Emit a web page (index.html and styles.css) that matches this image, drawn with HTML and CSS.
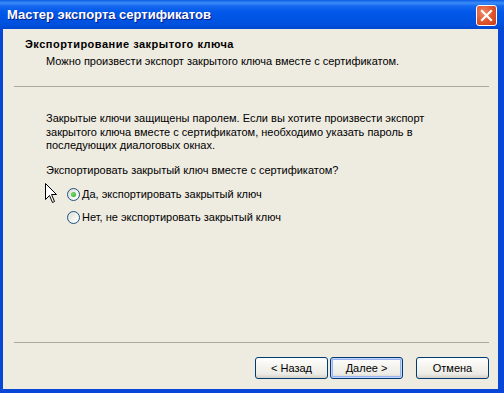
FILE: index.html
```html
<!DOCTYPE html>
<html lang="ru">
<head>
    <meta charset="UTF-8">
    <title>Мастер экспорта сертификатов</title>
    <link rel="stylesheet" href="styles.css">
</head>
<body>
<div class="window">
    <div class="titlebar">
        <span class="title-text">Мастер экспорта сертификатов</span>
        <span class="close-btn">
            <svg width="13" height="13" viewBox="0 0 13 13">
                <path d="M2 2 L11 11 M11 2 L2 11" stroke="#fff" stroke-width="2.2" stroke-linecap="square"/>
            </svg>
        </span>
    </div>
    <div class="client">
        <div class="header">
            <div class="header-title">Экспортирование закрытого ключа</div>
            <div class="header-sub">Можно произвести экспорт закрытого ключа вместе с сертификатом.</div>
        </div>
        <div class="rule"></div>
        <div class="content">
            <p class="info">Закрытые ключи защищены паролем. Если вы хотите произвести экспорт<br>закрытого ключа вместе с сертификатом, необходимо указать пароль в<br>последующих диалоговых окнах.</p>
            <p class="question">Экспортировать закрытый ключ вместе с сертификатом?</p>
            <div class="options">
                <div class="option"><span class="radio checked"></span>Да, экспортировать закрытый ключ</div>
                <div class="option"><span class="radio"></span>Нет, не экспортировать закрытый ключ</div>
            </div>
            <!-- mouse pointer over the dialog -->
            <svg class="cursor" width="13" height="21" viewBox="0 0 13 21">
                <path d="M0.5 0.5 L0.5 16.5 L4.5 12.5 L7.5 19.5 L9.5 18.5 L6.5 11.5 L11.5 11.5 Z" fill="#fff" stroke="#000" stroke-width="1"/>
            </svg>
        </div>
        <div class="rule"></div>
        <div class="footer">
            <button class="btn">&lt; Назад</button>
            <button class="btn default">Далее &gt;</button>
            <button class="btn cancel">Отмена</button>
        </div>
    </div>
</div>
</body>
</html>
```

FILE: styles.css
```css
body {
    margin: 0;
    background: #fff;
    font-family: "Liberation Sans", Arial, sans-serif;
    font-size: 11px;
    color: #000;
}
.window {
    width: 504px;
    height: 393px;
    box-sizing: border-box;
    display: flex;
    flex-direction: column;
    background: #0846d8;
    padding: 0 6px 4px 3px;
}
.titlebar {
    height: 29px;
    margin: 0 -6px 0 -3px;
    padding: 0 7px 0 7px;
    display: flex;
    align-items: center;
    justify-content: space-between;
    background: linear-gradient(#0a5ce6 0, #3d8df7 3px, #1468f0 6px, #0258e8 12px, #0055e5 60%, #0050dc 85%, #0047cf 100%);
}
.title-text {
    color: #fff;
    font-weight: bold;
    font-size: 13px;
    text-shadow: 1px 1px 0 #0a1e8a;
}
.close-btn {
    width: 19px;
    height: 19px;
    border: 1px solid #fff;
    border-radius: 3px;
    margin-top: 1px;
    display: flex;
    align-items: center;
    justify-content: center;
    background: radial-gradient(circle at 35% 35%, #f08a6a 0, #e0572f 50%, #c43a16 100%);
}
.client {
    flex: 1;
    display: flex;
    flex-direction: column;
    background: #eeebe0;
}
.header {
    height: 57px;
    box-sizing: border-box;
    padding: 9px 0 0 22px;
    line-height: 13px;
}
.header-title {
    font-weight: bold;
    letter-spacing: 0.5px;
}
.header-sub {
    margin-top: 4px;
    padding-left: 21px;
}
.rule {
    height: 1px;
    margin: 0 9px 0 11px;
    background: #aca899;
}
.content {
    position: relative;
    flex: 1;
    padding: 25px 0 0 43px;
    line-height: 13.5px;
}
.content p {
    margin: 0;
}
.question {
    margin-top: 11px !important;
}
.options {
    margin-top: 11px;
    padding-left: 21px;
    display: flex;
    flex-direction: column;
    gap: 10px;
}
.option {
    display: flex;
    align-items: center;
    height: 13px;
}
.radio {
    width: 11px;
    height: 11px;
    border: 1px solid #1c5180;
    border-radius: 50%;
    margin-right: 2px;
    background: linear-gradient(135deg, #dcdcd6 0, #f4f4f0 60%, #ffffff 100%);
    display: flex;
    align-items: center;
    justify-content: center;
}
.radio.checked::after {
    content: "";
    width: 5px;
    height: 5px;
    border-radius: 50%;
    background: radial-gradient(circle at 40% 40%, #7be36b 0, #21a121 100%);
}
.cursor {
    position: absolute;
    left: 42px;
    top: 96px;
}
.footer {
    height: 46px;
    box-sizing: border-box;
    padding: 14px 9px 0 0;
    display: flex;
    justify-content: flex-end;
    gap: 2px;
}
.btn {
    width: 73px;
    height: 22px;
    padding: 0;
    border: 1px solid #003c74;
    border-radius: 3px;
    font-family: "Liberation Sans", Arial, sans-serif;
    font-size: 11px;
    color: #000;
    background: linear-gradient(#ffffff 0, #f5f4ef 40%, #ecebe6 80%, #d6d0c5 100%);
}
.btn.default {
    box-shadow: inset 0 0 0 1px #c2d3fc, inset 0 0 0 2px #98b4ef;
}
.btn.cancel {
    margin-left: 11px;
}
```
